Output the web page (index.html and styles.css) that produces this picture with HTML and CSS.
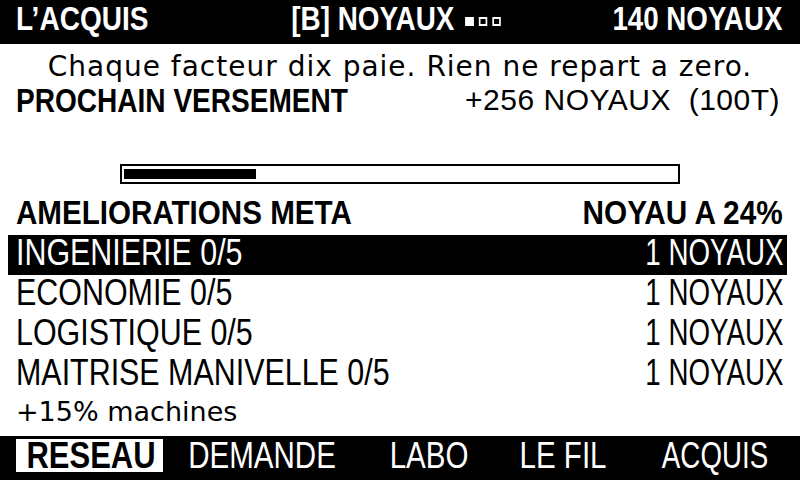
FILE: index.html
```html
<!DOCTYPE html>
<html lang="fr">
<head>
<meta charset="utf-8">
<title>L’ACQUIS</title>
<link rel="stylesheet" href="styles.css">
</head>
<body>
<div class="screen">
  <header class="topbar">
    <span class="top-left">L’ACQUIS</span>
    <span class="top-center">[B] NOYAUX<span class="dots"><i class="dot on"></i><i class="dot"></i><i class="dot"></i></span></span>
    <span class="top-right">140 NOYAUX</span>
  </header>
  <p class="intro">Chaque facteur dix paie. Rien ne repart a zero.</p>
  <div class="payout">
    <span class="payout-label">PROCHAIN VERSEMENT</span>
    <span class="payout-value">+256 NOYAUX&nbsp;&nbsp;(100T)</span>
  </div>
  <div class="progress"><div class="progress-fill" style="width:24%"></div></div>
  <div class="section-head">
    <span class="head-left">AMELIORATIONS META</span>
    <span class="head-right">NOYAU A 24%</span>
  </div>
  <ul class="upgrades">
    <li class="upgrade selected"><span class="up-name">INGENIERIE 0/5</span><span class="up-cost">1 NOYAUX</span></li>
    <li class="upgrade"><span class="up-name">ECONOMIE 0/5</span><span class="up-cost">1 NOYAUX</span></li>
    <li class="upgrade"><span class="up-name">LOGISTIQUE 0/5</span><span class="up-cost">1 NOYAUX</span></li>
    <li class="upgrade"><span class="up-name">MAITRISE MANIVELLE 0/5</span><span class="up-cost">1 NOYAUX</span></li>
  </ul>
  <p class="note">+15% machines</p>
  <nav class="tabs">
    <span class="tab active"><span class="tab-label">RESEAU</span></span>
    <span class="tab"><span class="tab-label">DEMANDE</span></span>
    <span class="tab"><span class="tab-label">LABO</span></span>
    <span class="tab"><span class="tab-label">LE FIL</span></span>
    <span class="tab"><span class="tab-label">ACQUIS</span></span>
  </nav>
</div>
</body>
</html>
```

FILE: styles.css
```css
* { box-sizing: border-box; margin: 0; padding: 0; }
html, body { width: 800px; height: 480px; background: #fff; overflow: hidden; }
body {
  color: #000;
  font-family: "Liberation Sans", Arial, sans-serif;
}
.screen { width: 800px; height: 480px; display: flex; flex-direction: column; }

/* condensed pixel-font look: squeeze glyphs horizontally */
.top-left, .top-center, .top-right,
.payout-label, .head-left, .head-right,
.up-name, .up-cost, .tab-label {
  display: inline-block;
  white-space: nowrap;
}

.topbar {
  height: 44px;
  background: #000;
  color: #fff;
  display: grid;
  grid-template-columns: 1fr auto 1fr;
  align-items: start;
  padding: 0 18px 0 16px;
  font-weight: 700;
  font-size: 33px;
  line-height: 37px;
}
.top-left { justify-self: start; transform: scaleX(0.85); transform-origin: left center; }
.top-right { justify-self: end; transform: scaleX(0.84); transform-origin: right center; }
.top-center {
  display: flex;
  align-items: center;
  transform: scaleX(0.845);
  transform-origin: center;
  margin-left: -6px;
}
.dots { display: flex; gap: 6px; margin-left: 13px; margin-top: 5px; }
.dot { display: block; width: 10px; height: 9px; border: 2px solid #fff; }
.dot.on { background: #fff; }

.intro {
  height: 42px;
  padding-top: 5px;
  line-height: 36px;
  text-align: center;
  font-family: "DejaVu Sans", sans-serif;
  font-size: 28px;
  letter-spacing: 1px;
  white-space: nowrap;
}

.payout {
  height: 28px;
  line-height: 28px;
  display: flex;
  justify-content: space-between;
  padding: 0 20px 0 16px;
  white-space: nowrap;
}
.payout-label {
  font-weight: 700;
  font-size: 34px;
  transform: scaleX(0.825);
  transform-origin: left center;
}
.payout-value { font-size: 30px; letter-spacing: 0.5px; }

.progress {
  margin: 50px 0 0 120px;
  width: 560px;
  height: 20px;
  border: 2px solid #000;
  padding: 3px 2px;
}
.progress-fill { height: 100%; background: #000; }

.section-head {
  margin-top: 14px;
  height: 28px;
  line-height: 28px;
  display: flex;
  justify-content: space-between;
  padding: 0 17px 0 16px;
  font-weight: 700;
  font-size: 34px;
}
.head-left { transform: scaleX(0.87); transform-origin: left center; }
.head-right { transform: scaleX(0.875); transform-origin: right center; }

.upgrades { list-style: none; margin: 9px 13px 0 8px; }
.upgrade {
  height: 40px;
  display: flex;
  justify-content: space-between;
  padding: 0 4px 5px 8px;
  line-height: 35px;
  font-size: 36px;
}
.upgrade.selected { background: #000; color: #fff; }
.up-name { transform: scaleX(0.845); transform-origin: left center; }
.up-cost { transform: scaleX(0.77); transform-origin: right center; }

.note {
  height: 41px;
  padding: 0 0 7px 16px;
  line-height: 34px;
  font-family: "DejaVu Sans", sans-serif;
  font-size: 27px;
  white-space: nowrap;
}

.tabs {
  height: 44px;
  background: #000;
  display: grid;
  grid-template-columns: 147px 199px 134px 135px 169px;
  align-items: start;
  padding: 3px 0 0 16px;
}
.tab {
  height: 33px;
  line-height: 33px;
  font-size: 36px;
  color: #fff;
  text-align: center;
  white-space: nowrap;
}
.tab-label { transform: scaleX(0.82); transform-origin: center; }
.tab:last-child .tab-label { transform: scaleX(0.77); }
.tab.active { background: #fff; color: #000; font-weight: 700; }
.tab.active .tab-label { transform: scaleX(0.86); }
```
